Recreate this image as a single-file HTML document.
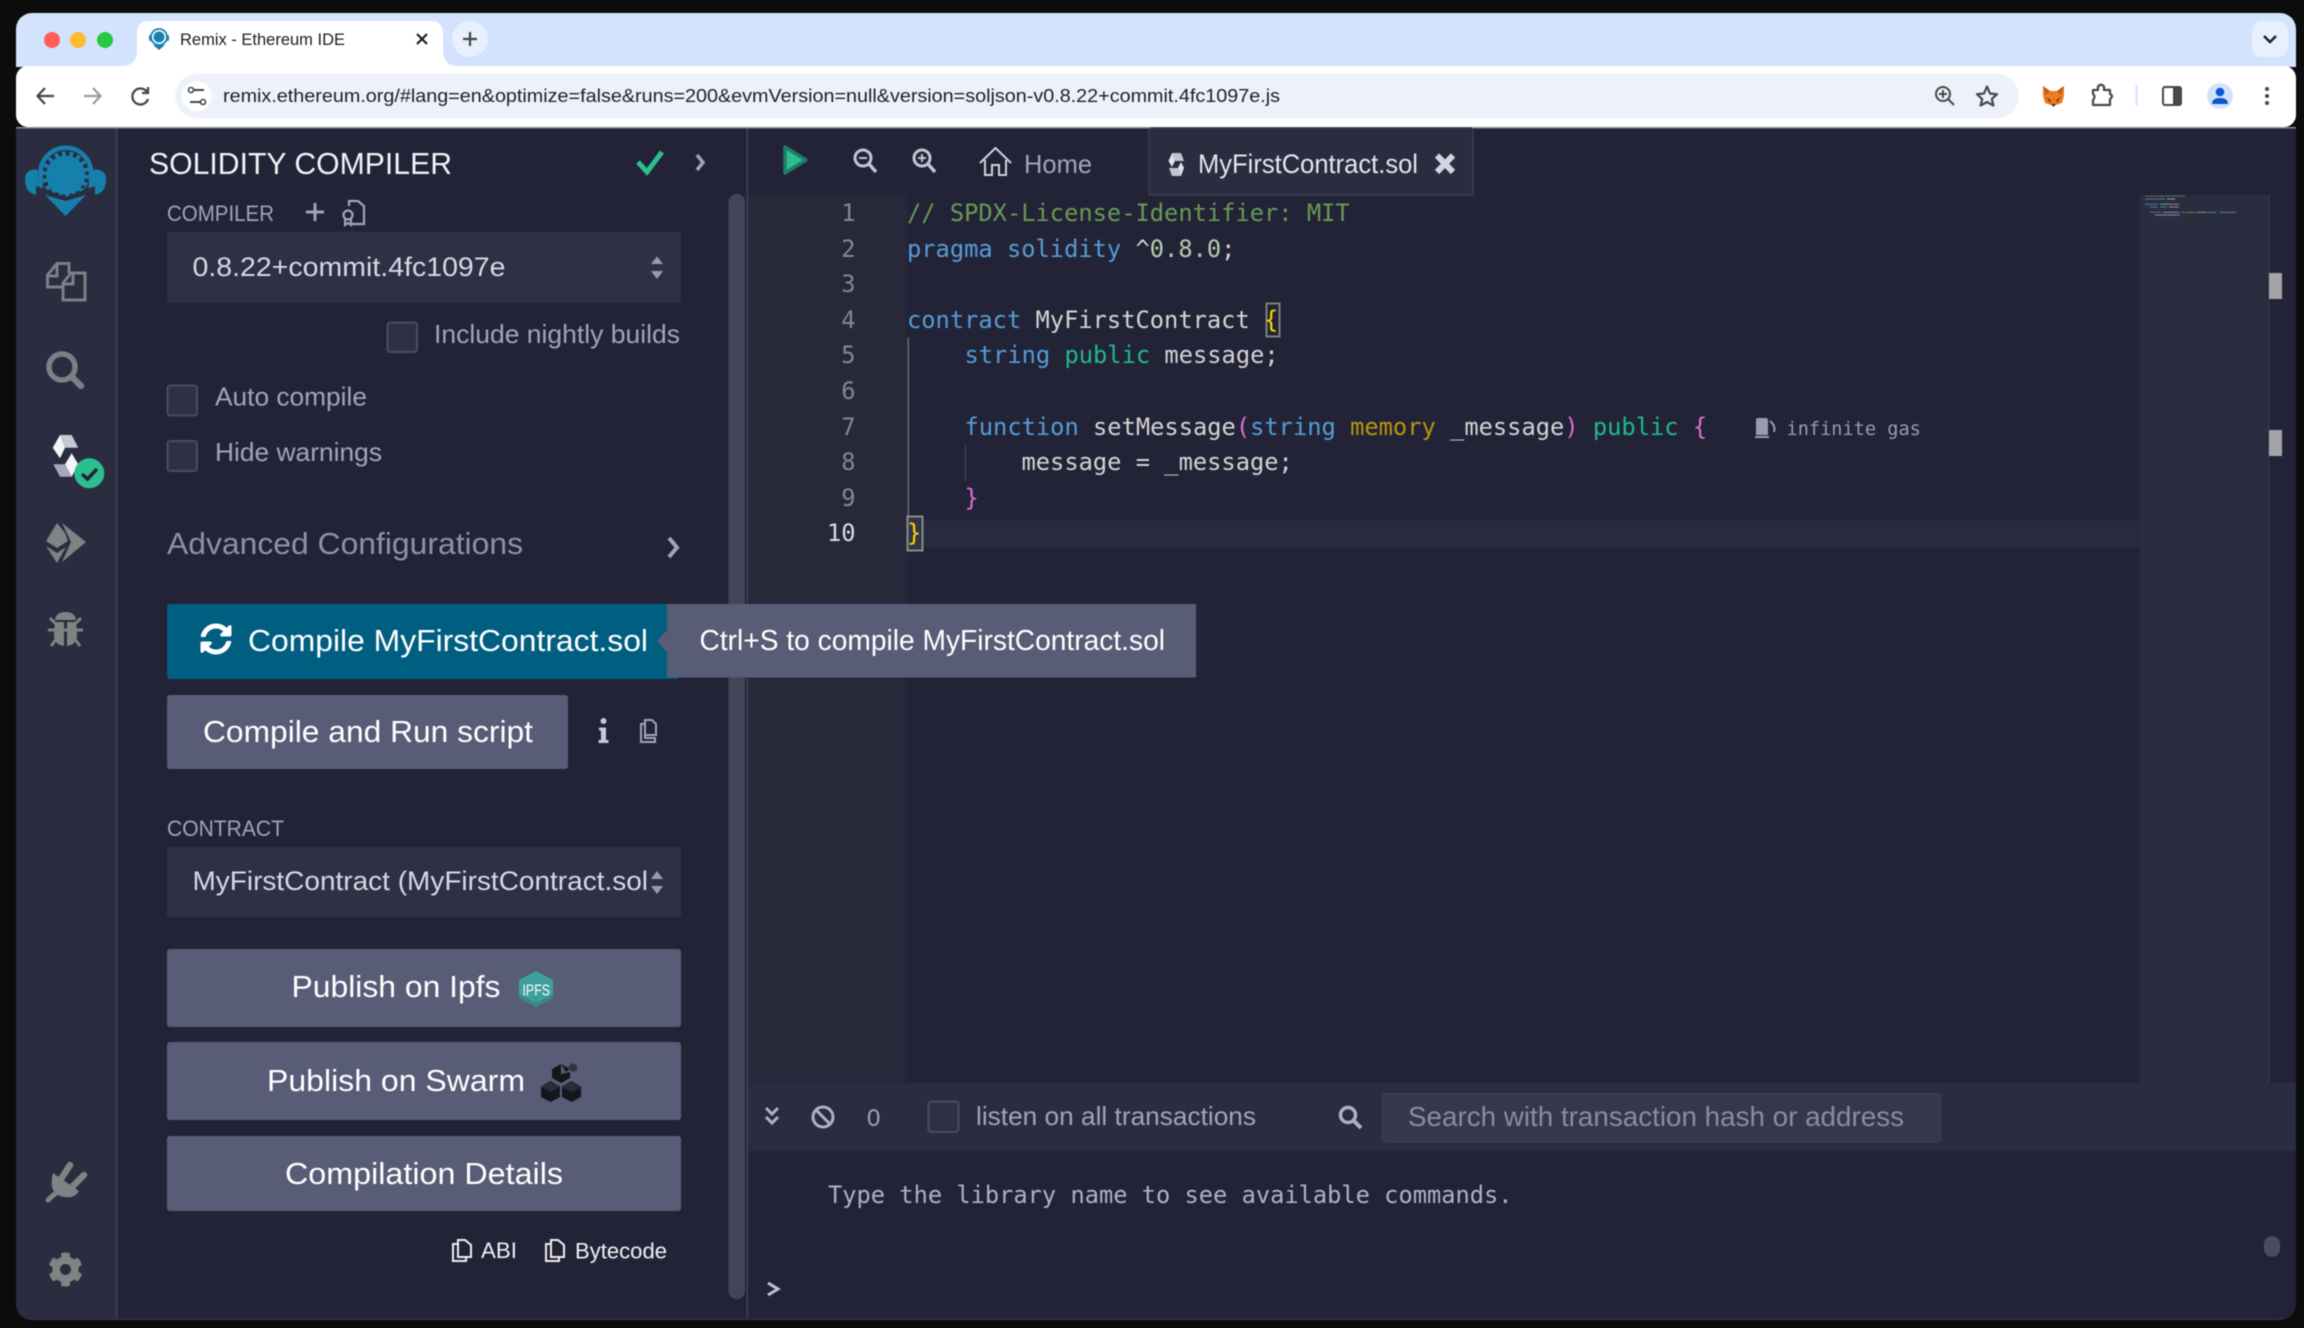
<!DOCTYPE html>
<html lang="en"><head><meta charset="utf-8"><title>Remix - Ethereum IDE</title>
<style>
html,body{margin:0;padding:0;background:#0c0c0c;width:2304px;height:1328px;overflow:hidden}
svg{display:block;filter:blur(.45px)}
.u{font-family:"Liberation Sans",sans-serif}
.m{font-family:"DejaVu Sans Mono",monospace;white-space:pre;font-size:23.72px}
</style></head><body>
<svg xmlns="http://www.w3.org/2000/svg" width="2304" height="1328" viewBox="0 0 2304 1328">
<defs><clipPath id="w"><rect x="16" y="13" width="2280" height="1307" rx="16"/></clipPath></defs>
<rect width="2304" height="1328" fill="#0c0c0c"/>
<g clip-path="url(#w)">
<!-- chrome -->
<rect x="16" y="13" width="2280" height="54" fill="#d3e3fd"/>
<rect x="16" y="66" width="2280" height="61" rx="12" fill="#fff"/>
<rect x="16" y="127" width="2280" height="1.5" fill="#8b8c96"/>
<circle cx="52" cy="40" r="8" fill="#ff5f57"/><circle cx="78" cy="40" r="8" fill="#febc2e"/><circle cx="105" cy="40" r="8" fill="#28c840"/>
<path d="M122 66Q137 66 137 50V33Q137 21 149 21H431Q443 21 443 33V50Q443 66 458 66Z" fill="#fff"/>
<circle cx="159" cy="37" r="5.5" fill="#1a80ad"/><circle cx="159" cy="37" r="8" fill="none" stroke="#1a80ad" stroke-width="1.8"/><rect x="149" y="35" width="3" height="6" rx="1.5" fill="#1a80ad"/><rect x="166" y="35" width="3" height="6" rx="1.5" fill="#1a80ad"/><path d="M153 45L159 50L165 45Z" fill="#1a80ad"/>
<text class="u" x="180" y="45" font-size="17" fill="#1f1f1f" textLength="165" lengthAdjust="spacingAndGlyphs">Remix - Ethereum IDE</text>
<path d="M417 34L427 44M427 34L417 44" stroke="#1f1f1f" stroke-width="2.2"/>
<circle cx="470" cy="39" r="18" fill="#e8f0fd"/><path d="M470 32V46M463 39H477" stroke="#444" stroke-width="2.2"/>
<rect x="2252" y="21" width="36" height="36" rx="10" fill="#e8f0fd"/><path d="M2264 36L2270 42L2276 36" fill="none" stroke="#1f1f1f" stroke-width="2.4"/>
<path d="M54 96H38M45 88L37.5 96L45 104" fill="none" stroke="#474747" stroke-width="2.3"/>
<path d="M84 96H100M93 88L100.5 96L93 104" fill="none" stroke="#9a9a9a" stroke-width="2.3"/>
<path d="M147 92A8 8 0 1 0 148 99M148 87V93H142" fill="none" stroke="#474747" stroke-width="2.3"/>
<rect x="175" y="74" width="1844" height="44" rx="22" fill="#edf2fa"/>
<circle cx="197" cy="96" r="15" fill="#fff"/>
<path d="M194 90H204M190 102H200" stroke="#474747" stroke-width="2"/><circle cx="191" cy="90" r="2.5" fill="none" stroke="#474747" stroke-width="1.6"/><circle cx="203" cy="102" r="2.5" fill="none" stroke="#474747" stroke-width="1.6"/>
<text class="u" x="223" y="102" font-size="18.5" fill="#1f1f1f" textLength="1057" lengthAdjust="spacingAndGlyphs">remix.ethereum.org/#lang=en&amp;optimize=false&amp;runs=200&amp;evmVersion=null&amp;version=soljson-v0.8.22+commit.4fc1097e.js</text>
<circle cx="1943" cy="94" r="7" fill="none" stroke="#474747" stroke-width="2"/><path d="M1948 99L1954 105M1943 90V98M1939 94H1947" stroke="#474747" stroke-width="2"/>
<path d="M1987 86.5L1990 93.5L1997 94.2L1991.8 99L1993.4 105.5L1987 102L1980.6 105.5L1982.2 99L1977 94.2L1984 93.5Z" fill="none" stroke="#474747" stroke-width="2.2" stroke-linejoin="round"/>
<path d="M2043 86L2050 91H2057L2064 86L2064 96L2062 103L2056 105H2051L2045 103L2043 96Z" fill="#ee7a22"/><path d="M2043 86L2050 91L2046 95ZM2064 86L2057 91L2061 95Z" fill="#b85d1a"/><path d="M2046 97L2051 100L2050 103ZM2061 97L2056 100L2057 103Z" fill="#7a4315"/><path d="M2051 104H2056L2053.5 107Z" fill="#333"/>
<path d="M2093 90H2098V86.5Q2101 83 2104 86.5V90H2110V94Q2114 96 2110 99V105H2093V100Q2096 96.5 2093 94Z" fill="none" stroke="#474747" stroke-width="2.2" stroke-linejoin="round"/>
<rect x="2135.5" y="85" width="2" height="21" fill="#d3e3fd"/>
<rect x="2163" y="87" width="18" height="18" rx="2" fill="#fff" stroke="#474747" stroke-width="2"/><rect x="2173" y="87" width="8" height="18" fill="#474747"/>
<circle cx="2220" cy="96" r="13" fill="#d3e3fd"/><circle cx="2220" cy="92" r="4.3" fill="#0b57d0"/><path d="M2212 104Q2212 98 2220 98Q2228 98 2228 104Z" fill="#0b57d0"/>
<circle cx="2267" cy="89" r="2" fill="#474747"/><circle cx="2267" cy="96" r="2" fill="#474747"/><circle cx="2267" cy="103" r="2" fill="#474747"/>

<!-- panels -->
<rect x="16" y="128.5" width="2280" height="1192" fill="#222336"/>
<rect x="16" y="128.5" width="100" height="1192" fill="#2a2c3f"/>
<rect x="116" y="128.5" width="1.5" height="1192" fill="#3f4155"/>
<rect x="746.5" y="128.5" width="1.5" height="1192" fill="#3f4155"/>
<rect x="16" y="1318" width="2280" height="3" fill="#2f3040"/>

<!-- logo -->
<g fill="#1680ad">
<path d="M39 195Q31 195 27 189Q25 184 25 179Q25 170 35 169.500Q38 169.500 38 171V192Z"/>
<path d="M92 195Q100 195 104 189Q106 184 106 179Q106 170 96 169.500Q93 169.500 93 171V192Z"/>
</g>
<path d="M40.500 191V173A25.200 25.200 0 0 1 91 173V191" fill="none" stroke="#1680ad" stroke-width="4.500"/>
<circle cx="65.700" cy="175" r="19.500" fill="#1680ad"/>
<circle cx="65.700" cy="175" r="21.500" fill="none" stroke="#1680ad" stroke-width="4.500" stroke-dasharray="3.750 3.750"/>
<path d="M36 186L65.700 197L95 186V204H36Z" fill="#2a2c3f"/>
<path d="M42 187L65.700 195L89 187L65.700 191Z" fill="#1680ad"/>
<path d="M45 195L65.700 201L86 195L65.700 216Z" fill="#1680ad"/>

<!-- files -->
<g fill="none" stroke="#7c7f83" stroke-width="3">
<path d="M62 263.5H69V273M71 287H47.5V275L57 263.5H62"/><path d="M47.5 276H57V264"/>
<path d="M74 273H85V300H63V283L71 273Z" fill="#2a2c3f"/><path d="M63 284H73V273"/>
</g>
<!-- search -->
<circle cx="62" cy="367" r="13" fill="none" stroke="#7c7f83" stroke-width="5.5"/><path d="M72 377L81 386" stroke="#7c7f83" stroke-width="6.5" stroke-linecap="round"/>
<!-- solidity -->
<polygon points="60,435 71.7,435 78.3,447.7 65,447.7" fill="#c8c8d2"/><polygon points="60,435 52.7,447.7 60,458.3 65,447.7" fill="#f5f5f8"/>
<polygon points="71.7,453.3 65,464.3 71.7,476.7 78.3,464.3" fill="#f5f5f8"/><polygon points="53.3,464.3 65,464.3 71.7,476.7 60,476.7" fill="#a8a8ba"/>
<circle cx="89.3" cy="473.3" r="15" fill="#2dbe8f"/><path d="M82 474L87.5 479L97 469" fill="none" stroke="#222336" stroke-width="3.5"/>
<!-- eth -->
<g fill="#7f8383"><path d="M57 523L46 541L57 548L68 541L65 533Z"/><path d="M46 546L57 553L66 547L57 563Z"/><path d="M62 523L86 542L62 562L71 542Z"/></g>
<!-- bug -->
<g fill="#7f8383"><path d="M55 620Q56 612 65.5 612Q75 612 76 620Z"/><path d="M55 622H64V646Q54 645 54 634ZM67 622H76L77 634Q77 645 67 646Z"/></g>
<path d="M48 630H83M50 618L57 625M81 618L74 625M51 646L57 638M80 646L74 638" stroke="#7f8383" stroke-width="3"/>
<!-- plug -->
<path d="M53 1173L79 1191Q74 1199 64 1197Q54 1195 52 1187Q51 1179 53 1173Z" fill="#7f8383"/>
<path d="M61 1179L70 1165M72 1187L84 1175" stroke="#7f8383" stroke-width="6.500" stroke-linecap="round"/>
<path d="M57 1192L48 1200" stroke="#7f8383" stroke-width="5" stroke-linecap="round"/>
<!-- gear -->
<path transform="translate(48,1252) scale(.0684)" fill="#7f8383" d="M487.4 315.7l-42.6-24.6c4.3-23.2 4.3-47 0-70.2l42.6-24.6c4.9-2.8 7.1-8.6 5.5-14-11.1-35.6-30-67.8-54.7-94.6-3.8-4.1-10-5.1-14.8-2.3L380.8 110c-17.9-15.4-38.5-27.3-60.8-35.1V25.8c0-5.6-3.9-10.5-9.4-11.7-36.7-8.2-74.3-7.8-109.2 0-5.5 1.2-9.4 6.1-9.4 11.7V75c-22.2 7.9-42.8 19.8-60.8 35.1L88.7 85.5c-4.9-2.8-11-1.9-14.8 2.3-24.7 26.7-43.6 58.9-54.7 94.6-1.7 5.4.6 11.2 5.5 14L67.3 221c-4.3 23.2-4.3 47 0 70.2l-42.6 24.6c-4.9 2.8-7.1 8.6-5.5 14 11.1 35.6 30 67.8 54.7 94.6 3.8 4.1 10 5.1 14.8 2.3l42.6-24.6c17.9 15.4 38.5 27.3 60.8 35.1v49.2c0 5.6 3.9 10.5 9.4 11.7 36.7 8.2 74.3 7.8 109.2 0 5.5-1.2 9.4-6.1 9.4-11.7v-49.2c22.2-7.9 42.8-19.8 60.8-35.1l42.6 24.6c4.9 2.8 11 1.9 14.8-2.3 24.7-26.7 43.6-58.9 54.7-94.6 1.5-5.5-.7-11.3-5.6-14.1zM256 336c-44.1 0-80-35.9-80-80s35.9-80 80-80 80 35.9 80 80-35.9 80-80 80z"/>

<!-- sidepanel -->
<text class="u" x="149" y="174" font-size="30.5" fill="#f2f2f7" textLength="303" lengthAdjust="spacingAndGlyphs">SOLIDITY COMPILER</text>
<path d="M638 162L647 172L662 152" fill="none" stroke="#2dbe8f" stroke-width="5"/>
<path d="M697 155L703 162.5L697 170" fill="none" stroke="#a2a3bd" stroke-width="3.5"/>
<rect x="728.5" y="194" width="16.5" height="1105" rx="8" fill="#42445a"/>
<text class="u" x="167" y="221" font-size="22.5" fill="#a2a3bd" textLength="107" lengthAdjust="spacingAndGlyphs">COMPILER</text>
<path d="M315 203V221M306 212H324" stroke="#a2a3bd" stroke-width="3"/>
<path d="M349 206V201H358L364 206V224H350" fill="none" stroke="#a2a3bd" stroke-width="2.2"/><circle cx="348" cy="215" r="4.5" fill="none" stroke="#a2a3bd" stroke-width="2.2"/><path d="M345 219V225L348 223L351 225V219" fill="none" stroke="#a2a3bd" stroke-width="2"/>
<rect x="167" y="232" width="514" height="71" rx="3" fill="#2f3044"/>
<text class="u" x="192.5" y="276" font-size="27" fill="#d8d8e6" textLength="313" lengthAdjust="spacingAndGlyphs">0.8.22+commit.4fc1097e</text>
<path d="M651 264L657 256.5L663 264ZM651 271L657 279L663 271Z" fill="#9a9bb2"/>
<rect x="387.5" y="322.5" width="29.5" height="29.5" rx="3" fill="#2f3044" stroke="#4a4b61" stroke-width="2"/>
<text class="u" x="434" y="343" font-size="26" fill="#a2a3bd" textLength="246" lengthAdjust="spacingAndGlyphs">Include nightly builds</text>
<rect x="167.5" y="385.5" width="29.5" height="30" rx="3" fill="#2f3044" stroke="#4a4b61" stroke-width="2"/>
<text class="u" x="215" y="405.5" font-size="26" fill="#a2a3bd" textLength="152" lengthAdjust="spacingAndGlyphs">Auto compile</text>
<rect x="167.5" y="441" width="29.5" height="30" rx="3" fill="#2f3044" stroke="#4a4b61" stroke-width="2"/>
<text class="u" x="215" y="461" font-size="26" fill="#a2a3bd" textLength="167" lengthAdjust="spacingAndGlyphs">Hide warnings</text>
<text class="u" x="167" y="554" font-size="31" fill="#8f90ab" textLength="356" lengthAdjust="spacingAndGlyphs">Advanced Configurations</text>
<path d="M669 538L677 547.5L669 557" fill="none" stroke="#a2a3bd" stroke-width="4"/>
<rect x="167" y="604" width="512" height="75" rx="3" fill="#005e80"/>
<path transform="translate(200,623) scale(.0625)" fill="#fff" d="M370.72 133.28C339.458 104.008 298.888 87.962 255.848 88c-77.458.068-144.328 53.178-162.791 126.85-1.344 5.363-6.122 9.15-11.651 9.15H24.103c-7.498 0-13.194-6.807-11.807-14.176C33.933 94.924 134.813 8 256 8c66.448 0 126.791 26.136 171.315 68.685L463.03 40.97C478.149 25.851 504 36.559 504 57.941V192c0 13.255-10.745 24-24 24H345.941c-21.382 0-32.09-25.851-16.971-40.971l41.75-41.749zM32 296h134.059c21.382 0 32.09 25.851 16.971 40.971l-41.75 41.75c31.262 29.273 71.835 45.319 114.876 45.28 77.418-.07 144.315-53.144 162.787-126.849 1.344-5.363 6.122-9.15 11.651-9.15h57.304c7.498 0 13.194 6.807 11.807 14.176C478.067 417.076 377.187 504 256 504c-66.448 0-126.791-26.136-171.315-68.685L48.97 471.03C33.851 486.149 8 475.441 8 454.059V320c0-13.255 10.745-24 24-24z"/>
<text class="u" x="248" y="651" font-size="31" fill="#fff" textLength="400" lengthAdjust="spacingAndGlyphs">Compile MyFirstContract.sol</text>
<rect x="167" y="695" width="401" height="74" rx="3" fill="#595c76"/>
<text class="u" x="203" y="742" font-size="31" fill="#fff" textLength="330" lengthAdjust="spacingAndGlyphs">Compile and Run script</text>
<circle cx="603.5" cy="721" r="3" fill="#c8c8d8"/><path d="M599 727.5H606V740H608.5V743H598.5V740H601V730.5H599Z" fill="#c8c8d8"/>
<path d="M641 724H645V738H655V742H641ZM645 720H652L656 724V735H645Z" fill="none" stroke="#a2a3bd" stroke-width="2"/>
<text class="u" x="167" y="836" font-size="22.5" fill="#a2a3bd" textLength="117" lengthAdjust="spacingAndGlyphs">CONTRACT</text>
<rect x="167" y="847" width="514" height="70" rx="3" fill="#2f3044"/>
<text class="u" x="192.5" y="890" font-size="27" fill="#d8d8e6" textLength="455.5" lengthAdjust="spacingAndGlyphs">MyFirstContract (MyFirstContract.sol</text>
<path d="M651 879L657 871L663 879ZM651 886L657 894L663 886Z" fill="#9a9bb2"/>
<rect x="167" y="949" width="514" height="78" rx="3" fill="#595c76"/>
<text class="u" x="291.500" y="997" font-size="31" fill="#fff" textLength="209" lengthAdjust="spacingAndGlyphs">Publish on Ipfs</text>
<polygon points="536,971 553,980 553,998 536,1007 519,998 519,980" fill="#3f9f9c"/><path d="M519 998L536 1007L553 998L553 994L536 1003L519 994Z" fill="#37888a"/><path d="M536 1007V996" stroke="#358b89" stroke-width="1.5"/>
<text class="u" x="522.500" y="995.500" font-size="15.500" fill="#fff" textLength="27.500" lengthAdjust="spacingAndGlyphs">IPFS</text>
<rect x="167" y="1042" width="514" height="78" rx="3" fill="#595c76"/>
<text class="u" x="267" y="1091" font-size="31" fill="#fff" textLength="258" lengthAdjust="spacingAndGlyphs">Publish on Swarm</text>
<g fill="#15151d"><polygon points="561,1064 570,1069 570,1078 561,1083 552,1078 552,1069"/><polygon points="550.500,1081 560,1086.500 560,1097 550.500,1102 541,1097 541,1086.500"/><polygon points="571.500,1081 581,1086.500 581,1097 571.500,1102 562,1097 562,1086.500"/></g>
<polygon points="573,1063 577,1065.500 577,1070 573,1072 569,1070 569,1065.500" fill="#34343e"/>
<path d="M561 1064L566 1072L570 1069V1072L561 1074Z" fill="#595c76"/>
<path d="M541 1087L550.500 1092L560 1087L550.500 1081.500ZM562 1087L571.500 1092L581 1087L571.500 1081.500Z" fill="#2c2c38"/>
<rect x="167" y="1136" width="514" height="75" rx="3" fill="#595c76"/>
<text class="u" x="285" y="1184" font-size="31" fill="#fff" textLength="278" lengthAdjust="spacingAndGlyphs">Compilation Details</text>
<path d="M457 1244H453V1261H466V1257M458 1240H465L471 1245V1257H458Z" fill="none" stroke="#eee" stroke-width="2"/>
<text class="u" x="481" y="1258" font-size="22.5" fill="#f0f0f5" textLength="36" lengthAdjust="spacingAndGlyphs">ABI</text>
<path d="M550 1244H546V1261H559V1257M551 1240H558L564 1245V1257H551Z" fill="none" stroke="#eee" stroke-width="2"/>
<text class="u" x="575" y="1258.500" font-size="22.5" fill="#f0f0f5" textLength="92" lengthAdjust="spacingAndGlyphs">Bytecode</text>

<!-- editor tabs -->
<path d="M785 147L806 160L785 173Z" fill="#2dbe8f" stroke="#1f7d64" stroke-width="3.5" stroke-linejoin="round"/>
<circle cx="863" cy="158" r="8" fill="none" stroke="#c3c4d3" stroke-width="3"/><path d="M869 164L876 172" stroke="#c3c4d3" stroke-width="3.5"/><path d="M859 158H867" stroke="#c3c4d3" stroke-width="2"/>
<circle cx="922" cy="158" r="8" fill="none" stroke="#c3c4d3" stroke-width="3"/><path d="M928 164L935 172" stroke="#c3c4d3" stroke-width="3.5"/><path d="M918 158H926M922 154V162" stroke="#c3c4d3" stroke-width="2"/>
<path d="M980 163L995.5 148L1011 163M985 160V175H992V165H999V175H1006V160" fill="none" stroke="#d0d1dd" stroke-width="2"/>
<text class="u" x="1024" y="173" font-size="26" fill="#a2a3bd" textLength="68" lengthAdjust="spacingAndGlyphs">Home</text>
<path d="M1149 195V131Q1149 128 1152 128H1470Q1473 128 1473 131V195Z" fill="#2a2c3f" stroke="#3a3c50" stroke-width="1.5"/>
<g fill="#c3c4d3"><polygon points="1172,153 1181,153 1184,161 1175,161"/><polygon points="1172,153 1168.500,161 1172,167 1175,161" fill="#e2e2ea"/><polygon points="1181,162 1178,168 1181,176 1184,168" fill="#e2e2ea"/><polygon points="1169,168 1178,168 1181,176 1172,176"/></g>
<text class="u" x="1198" y="173" font-size="27" fill="#e6e6ee" textLength="220" lengthAdjust="spacingAndGlyphs">MyFirstContract.sol</text>
<path d="M1437 155.5L1453 172M1453 155.5L1437 172" stroke="#d4d5e0" stroke-width="6"/>

<!-- editor -->
<rect x="748" y="195" width="159" height="888" fill="#272839"/>
<rect x="2140" y="195" width="129" height="888" fill="#2a2c3f"/>
<rect x="2268.5" y="195" width="1" height="890" fill="#3a3c50"/>
<rect x="2269" y="273" width="13" height="26" fill="#a4a4a8"/>
<rect x="2269" y="430" width="13" height="26" fill="#a4a4a8"/>
<!-- minimap -->
<g opacity=".7"><rect x="2145" y="195.5" width="40" height="1.1" fill="#5f8a55"/><rect x="2145" y="198.500" width="20" height="1.1" fill="#5c93c6"/><rect x="2167" y="198.500" width="8" height="1.1" fill="#b5cea8"/>
<rect x="2145" y="203.700" width="13" height="1.1" fill="#5c93c6"/><rect x="2160" y="203.700" width="19" height="1.1" fill="#b0b0b8"/>
<rect x="2150" y="206.500" width="8" height="1.1" fill="#5c93c6"/><rect x="2160" y="206.500" width="7" height="1.1" fill="#2dbe8f"/><rect x="2169" y="206.500" width="10" height="1.1" fill="#b0b0b8"/>
<rect x="2150" y="211.800" width="11" height="1.1" fill="#5c93c6"/><rect x="2163" y="211.800" width="16" height="1.1" fill="#b0b0b8"/><rect x="2181" y="211.800" width="4" height="1.1" fill="#5c93c6"/><rect x="2186" y="211.800" width="9" height="1.1" fill="#b8960c"/><rect x="2196" y="211.800" width="11" height="1.1" fill="#b0b0b8"/><rect x="2208" y="211.800" width="8" height="1.1" fill="#2dbe8f"/><rect x="2220" y="211.800" width="16" height="1.1" fill="#8f90ab"/>
<rect x="2155" y="214.500" width="25" height="1.1" fill="#b0b0b8"/></g>
<rect x="907" y="520" width="1233" height="27.5" fill="#292a3d"/>
<rect x="907.5" y="338" width="1.5" height="178" fill="#6c6e78"/>
<rect x="965" y="445" width="1" height="36" fill="#4c4e5c"/>
<rect x="1266.5" y="303.5" width="13" height="33" fill="none" stroke="#7f8178" stroke-width="2"/>
<rect x="907.5" y="516.5" width="15" height="34" fill="#33354a" stroke="#8a8c86" stroke-width="2"/>
<g fill="#858790" text-anchor="end">
<text class="m" x="855.5" y="221">1</text><text class="m" x="855.5" y="257">2</text><text class="m" x="855.5" y="292">3</text><text class="m" x="855.5" y="328">4</text><text class="m" x="855.5" y="363">5</text><text class="m" x="855.5" y="399">6</text><text class="m" x="855.5" y="435">7</text><text class="m" x="855.5" y="470">8</text><text class="m" x="855.5" y="506">9</text><text class="m" x="855.5" y="541" fill="#dcdce0">10</text>
</g>
<text class="m" x="907" y="221" fill="#6a9955">// SPDX-License-Identifier: MIT</text>
<text class="m" x="907" y="257" xml:space="preserve"><tspan fill="#569cd6">pragma solidity</tspan><tspan fill="#d4d4d4"> ^</tspan><tspan fill="#b5cea8">0.8.0</tspan><tspan fill="#d4d4d4">;</tspan></text>
<text class="m" x="907" y="328" xml:space="preserve"><tspan fill="#569cd6">contract</tspan><tspan fill="#d4d4d4"> MyFirstContract </tspan><tspan fill="#ffd700">{</tspan></text>
<text class="m" x="964.5" y="363" xml:space="preserve"><tspan fill="#569cd6">string</tspan><tspan> </tspan><tspan fill="#1fb98a">public</tspan><tspan fill="#d4d4d4"> message;</tspan></text>
<text class="m" x="964.5" y="435" xml:space="preserve"><tspan fill="#569cd6">function</tspan><tspan fill="#d4d4d4"> setMessage</tspan><tspan fill="#da70d6">(</tspan><tspan fill="#569cd6">string</tspan><tspan> </tspan><tspan fill="#b8960c">memory</tspan><tspan fill="#d4d4d4"> _message</tspan><tspan fill="#da70d6">)</tspan><tspan> </tspan><tspan fill="#1fb98a">public</tspan><tspan fill="#d4d4d4"> </tspan><tspan fill="#da70d6">{</tspan></text>
<text class="m" x="1021.5" y="470" fill="#d4d4d4" xml:space="preserve">message = _message;</text>
<text class="m" x="964.5" y="506" fill="#da70d6">}</text>
<text class="m" x="907" y="541" fill="#ffd700">}</text>
<path d="M1756 420Q1756 418 1758 418H1766Q1768 418 1768 420V435H1756ZM1755 436H1769V438H1755Z" fill="#9a9bb0"/><path d="M1770 421Q1776 426 1774 432" fill="none" stroke="#9a9bb0" stroke-width="2"/>
<text class="m" x="1786.5" y="435" fill="#9a9bb0" style="font-size:18.6px">infinite gas</text>

<!-- tooltip (above editor) -->
<path d="M657 641L667 630V652Z" fill="#595c76"/>
<rect x="667" y="604" width="529" height="73.5" fill="#595c76"/>
<text class="u" x="699.5" y="650" font-size="28.5" fill="#fff" textLength="465.5" lengthAdjust="spacingAndGlyphs">Ctrl+S to compile MyFirstContract.sol</text>

<!-- terminal -->
<rect x="748" y="1083" width="1548" height="68" fill="#2a2c3f"/>
<path d="M766 1108L772 1114L778 1108M766 1117L772 1123L778 1117" fill="none" stroke="#b0b1c4" stroke-width="3"/>
<circle cx="823" cy="1117" r="10" fill="none" stroke="#b0b1c4" stroke-width="3"/><path d="M816 1110L830 1124" stroke="#b0b1c4" stroke-width="3"/>
<text class="u" x="867" y="1126" font-size="24" fill="#a2a3bd">0</text>
<rect x="928.5" y="1101.5" width="30" height="30.5" rx="3" fill="#2f3044" stroke="#4a4b61" stroke-width="2"/>
<text class="u" x="976" y="1125" font-size="26" fill="#a2a3bd" textLength="280" lengthAdjust="spacingAndGlyphs">listen on all transactions</text>
<circle cx="1348" cy="1115" r="7.5" fill="none" stroke="#b0b1c4" stroke-width="3.5"/><path d="M1354 1121L1361 1128" stroke="#b0b1c4" stroke-width="4"/>
<rect x="1382.5" y="1093.5" width="558" height="48.5" rx="3" fill="#35374c" stroke="#3e4056"/>
<text class="u" x="1408" y="1126" font-size="28" fill="#8a8ba5" textLength="496" lengthAdjust="spacingAndGlyphs">Search with transaction hash or address</text>
<text class="m" x="828" y="1203" fill="#b0b1c4" style="font-size:23.7px">Type the library name to see available commands.</text>
<path d="M768 1283L778 1289L768 1295" fill="none" stroke="#c0c1d2" stroke-width="3"/>
<rect x="2264" y="1236" width="16" height="21" rx="8" fill="#4a4c62"/>
</g>
</svg>
</body></html>
